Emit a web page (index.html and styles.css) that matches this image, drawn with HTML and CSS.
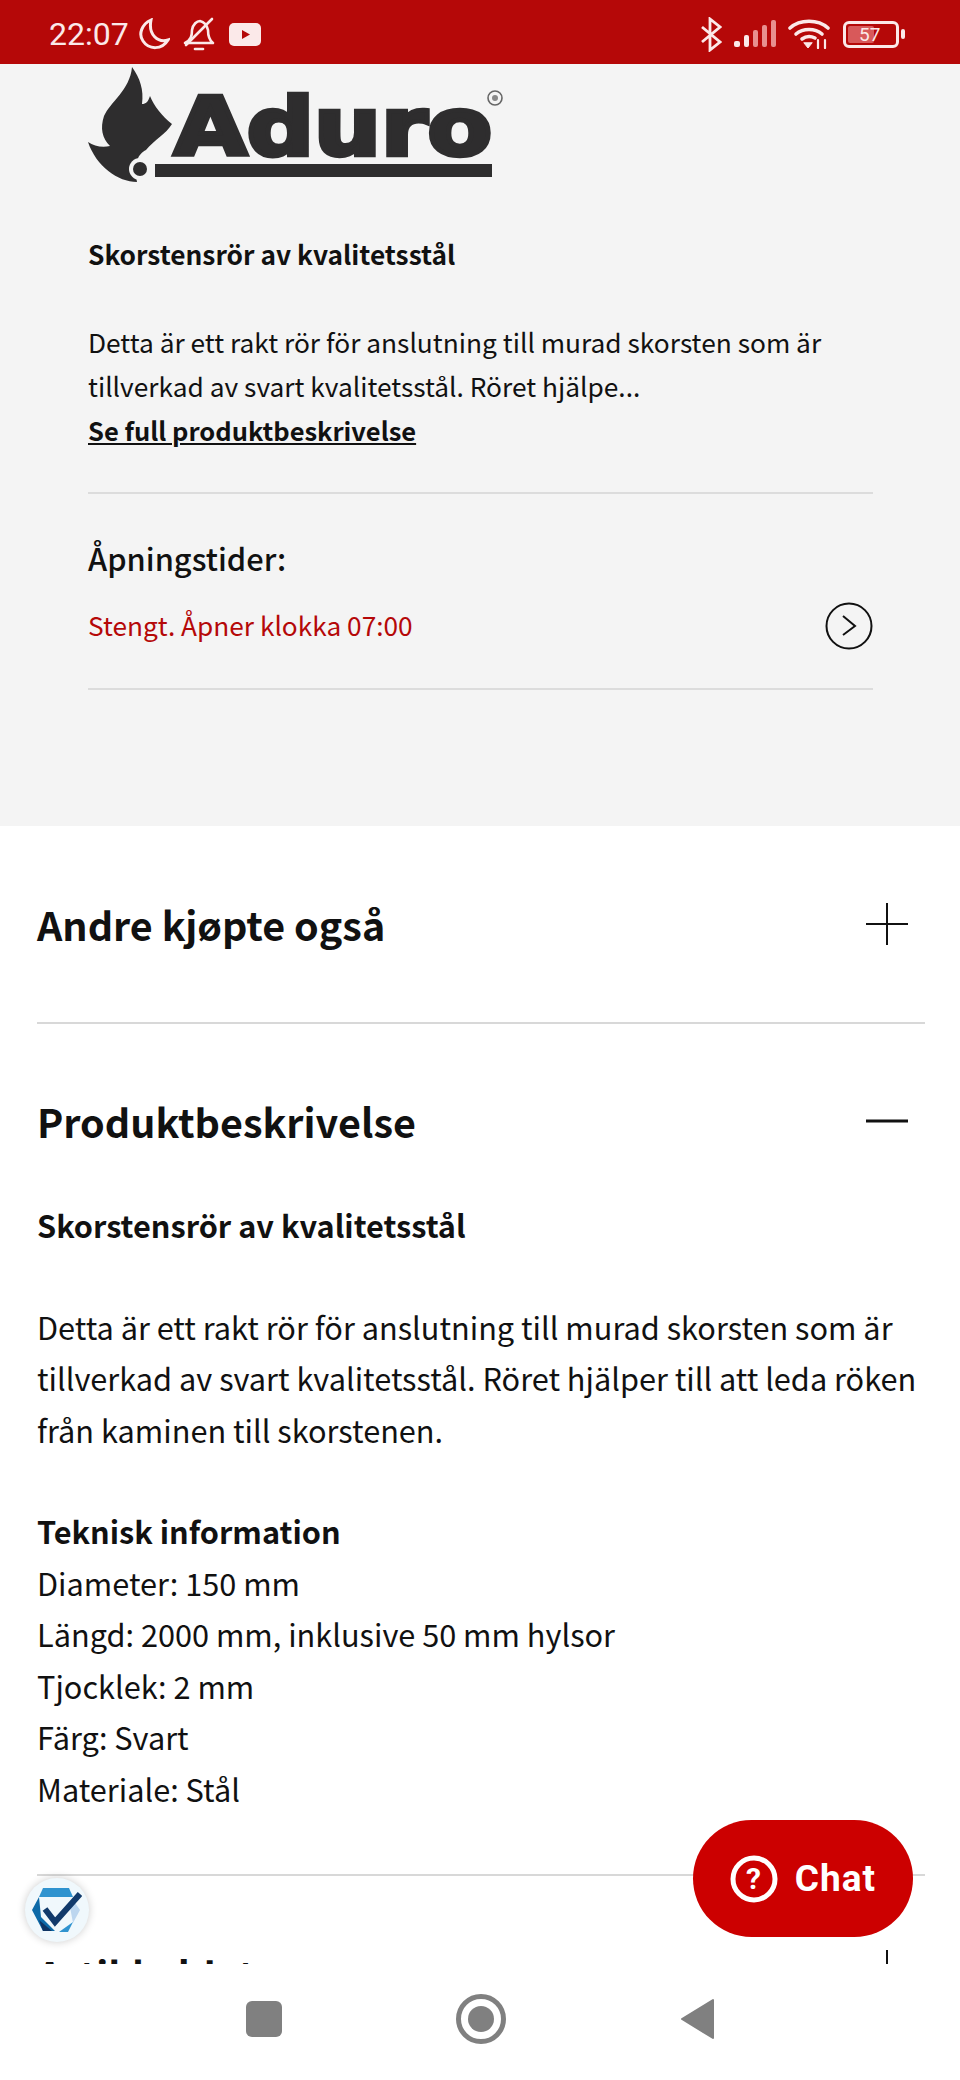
FILE: index.html
```html
<!DOCTYPE html>
<html lang="no">
<head>
  <meta charset="UTF-8" />
  <title>Skorstensrör</title>
  <meta name="viewport" content="width=device-width, initial-scale=1.0" />
  <link rel="stylesheet" href="styles.css">
</head>
<body>
  <div class="statusbar">
    <div class="status-left">
      <span class="clock">22:07</span>
      <svg class="moon" width="32" height="32" viewBox="0 0 32 32" fill="none" stroke="#fbe9e9" stroke-width="3"><path d="M13 2 C4 6 0 16 5 23 C11 32 24 32 30 22 C20 25 10 17 13 2 Z"/></svg>
      <svg class="bell" width="32" height="34" viewBox="0 0 32 34" fill="none" stroke="#fbe9e9" stroke-width="2.6" stroke-linecap="round" stroke-linejoin="round"><path d="M2 26 C8 23 9 19 9 13 C10 7 14 4 17 4 C22 5 24 9 25 13 C25 19 26 23 30 26 Z"/><path d="M29 2 L3 28"/><path d="M12 32 H20"/></svg>
      <svg class="yt" width="32" height="23" viewBox="0 0 32 23"><rect width="32" height="23" rx="5" fill="#fbe9e9"/><path d="M13 7 L21 11.5 L13 16 Z" fill="#b50808"/></svg>
    </div>
    <div class="status-right">
      <svg width="22" height="35" viewBox="0 0 22 35" fill="none" stroke="#fbe9e9" stroke-width="2.8"><path d="M2 10 L20 25 L10 33 V2 L20 10 L2 25"/></svg>
      <svg class="signal" width="42" height="28" viewBox="0 0 42 28"><rect x="0" y="21" width="6" height="6" rx="2" fill="#fbe9e9"/><rect x="10" y="15" width="5" height="12" rx="2" fill="#fbe9e9"/><rect x="19" y="10" width="5" height="17" rx="2" fill="#e8908f"/><rect x="28" y="5" width="5" height="22" rx="2" fill="#e8908f"/><rect x="37" y="0" width="5" height="27" rx="2" fill="#e8908f"/></svg>
      <svg class="wifi" width="42" height="30" viewBox="0 0 42 30" fill="none" stroke="#fbe9e9" stroke-width="3.6" stroke-linecap="round"><path d="M2 9 C12 0 30 0 40 9"/><path d="M8 15 C15 9 27 9 34 15"/><path d="M14 20 C18 17 23 17 27 19"/><path d="M16 24 L20 29 L24 24 Z" fill="#fbe9e9" stroke-width="1"/><path d="M30 21 V29 M37 21 V29" stroke-width="2.2"/></svg>
      <div class="battery"><div class="battery-fill"></div><span class="battery-num">57</span></div>
      <span class="battery-tip"></span>
    </div>
  </div>

  <section class="store">
    <svg class="logo" width="420" height="120" viewBox="0 0 420 120">
      <path d="M44 1 C52 12 56 24 54 38 C58 38 60 36 62 30 C66 40 74 50 84 58 C78 68 66 74 58 84 C50 88 46 96 49 116 C30 116 8 100 0 76 C6 80 14 82 22 80 C14 72 12 62 16 50 C22 36 42 24 44 1 Z" fill="#2e2d2e"/>
      <circle cx="52" cy="103" r="11" fill="#f4f4f4"/><circle cx="52" cy="103" r="7" fill="#2e2d2e"/>
      <rect x="67" y="98" width="337" height="13" fill="#2e2d2e"/>
      <text x="86" y="89" class="logo-word" textLength="318" lengthAdjust="spacingAndGlyphs">Aduro</text>
      <circle cx="407" cy="32" r="7" fill="none" stroke="#666" stroke-width="1.6"/>
      <circle cx="407" cy="32" r="3" fill="#888"/>
    </svg>
    <p class="store-title">Skorstensrör av kvalitetsstål</p>
    <p class="store-desc">Detta är ett rakt rör för anslutning till murad skorsten som är tillverkad av svart kvalitetsstål. Röret hjälpe...</p>
    <a class="store-link">Se full produktbeskrivelse</a>
    <hr class="store-line first">
    <h3 class="hours-title">Åpningstider:</h3>
    <div class="hours-row">
      <span class="hours-text">Stengt. Åpner klokka 07:00</span>
      <svg width="48" height="48" viewBox="0 0 48 48" fill="none" stroke="#111" stroke-width="2"><circle cx="24" cy="24" r="22.5"/><path d="M18 14 L30 24 L18 33"/></svg>
    </div>
    <hr class="store-line">
  </section>

  <section class="content">
    <div class="acc-head acc-first">
      <h2>Andre kjøpte også</h2>
      <svg width="42" height="42" viewBox="0 0 42 42" stroke="#111" stroke-width="2"><path d="M21 0 V42 M0 21 H42"/></svg>
    </div>
    <hr class="line">
    <div class="acc-head acc-second">
      <h2>Produktbeskrivelse</h2>
      <svg width="42" height="4" viewBox="0 0 42 4" stroke="#111" stroke-width="3"><path d="M0 2 H42"/></svg>
    </div>
    <div class="desc">
      <p class="desc-title">Skorstensrör av kvalitetsstål</p>
      <p class="desc-para">Detta är ett rakt rör för anslutning till murad skorsten som är tillverkad av svart kvalitetsstål. Röret hjälper till att leda röken från kaminen till skorstenen.</p>
      <p class="desc-specs"><b>Teknisk information</b><br>Diameter: 150 mm<br>Längd: 2000 mm, inklusive 50 mm hylsor<br>Tjocklek: 2 mm<br>Färg: Svart<br>Materiale: Stål</p>
    </div>
    <hr class="line">
    <div class="acc-cut">
      <h2>Artikkeldata</h2>
      <svg width="42" height="42" viewBox="0 0 42 42" stroke="#111" stroke-width="2"><path d="M21 0 V42 M0 21 H42"/></svg>
    </div>
  </section>

  <div class="navbar">
    <span class="nav-square"></span>
    <svg width="50" height="50" viewBox="0 0 50 50"><circle cx="25" cy="25" r="22.5" fill="none" stroke="#808080" stroke-width="5"/><circle cx="25" cy="25" r="13" fill="#808080"/></svg>
    <svg width="35" height="42" viewBox="0 0 35 42"><path d="M33 2 V40 L2 21 Z" fill="#808080" stroke="#808080" stroke-width="2" stroke-linejoin="round"/></svg>
  </div>

  <div class="badge">
    <svg width="50" height="46" viewBox="0 0 50 46">
      <path d="M11 1 H37 L41 10 H7 Z" fill="#2f93cf"/>
      <path d="M7 10 L0 23 L11 44 H23 L9 30 Z" fill="#0d6aa8"/>
      <path d="M11 44 L7 33 L20 44 Z" fill="#0f3564"/>
      <path d="M41 13 L48 23 L41 36 L38 20 Z" fill="#bcd6ef"/>
      <path d="M27 45 L41 35 L36 45 Z" fill="#2f93cf"/>
      <path d="M13 22 L23 35 L48 7" fill="none" stroke="#123a6b" stroke-width="6"/>
    </svg>
  </div>
  <div class="chat">
    <svg width="48" height="48" viewBox="0 0 48 48"><circle cx="24" cy="24" r="21" fill="none" stroke="#fff" stroke-width="5"/><text x="24" y="34" class="chat-q">?</text></svg>
    <span>Chat</span>
  </div>
</body>
</html>
```

FILE: styles.css
```css
html, body {
  margin: 0;
  padding: 0;
  background: #fff;
}

body {
  width: 960px;
  height: 2080px;
  overflow: hidden;
  position: relative;
  font-family: "Noto Sans CJK KR", "Noto Sans", sans-serif;
  color: #111;
}

.statusbar {
  height: 64px;
  background: #b50808;
  display: flex;
  justify-content: space-between;
  align-items: center;
  padding: 13px 55px 9px 49px;
  box-sizing: border-box;
  color: #fbe9e9;
}

.status-left, .status-right {
  display: flex;
  align-items: center;
}

.clock {
  font-family: "Roboto", sans-serif;
  font-size: 32px;
}

.moon { margin-left: 9px; }
.bell { margin-left: 13px; }
.yt { margin-left: 14px; }

.signal { margin-left: 12px; }
.wifi { margin-left: 12px; }

.battery {
  width: 56px;
  height: 27px;
  margin-left: 13px;
  border: 3px solid #fbe9e9;
  border-radius: 6px;
  box-sizing: border-box;
  position: relative;
  padding: 2px;
}

.battery-fill {
  width: 57%;
  height: 100%;
  background: #d8595a;
  border-radius: 2px;
}

.battery-num {
  position: absolute;
  left: 13px;
  top: -3px;
  font-family: "Roboto", sans-serif;
  font-size: 19px;
  line-height: 27px;
}

.battery-tip {
  width: 4px;
  height: 10px;
  margin-left: 2px;
  background: #fbe9e9;
  border-radius: 2px;
}

.store {
  height: 762px;
  background: #f4f4f4;
  padding: 2px 87px 0 88px;
  box-sizing: border-box;
}

.logo {
  display: block;
  overflow: visible;
}

.logo-word {
  font-family: "DejaVu Sans", sans-serif;
  font-weight: bold;
  font-size: 80px;
  fill: #2e2d2e;
  stroke: #2e2d2e;
  stroke-width: 4.5px;
}

.store-title {
  margin: 50px 0 0;
  font-size: 26.3px;
  font-weight: bold;
  line-height: 36px;
}

.store-desc {
  margin: 48px 0 0;
  font-size: 26.3px;
  line-height: 44px;
}

.store-link {
  display: block;
  font-size: 25.5px;
  font-weight: bold;
  line-height: 44px;
  text-decoration: underline;
}

.store-line {
  border: 0;
  border-top: 2px solid #dcdcdc;
  margin: 0;
}

.store-line.first { margin-top: 40px; }

.hours-title {
  margin: 44px 0 0;
  font-size: 30.8px;
  font-weight: 500;
  line-height: 40px;
}

.hours-row {
  display: flex;
  justify-content: space-between;
  align-items: center;
  margin: 24px 0 38px;
}

.hours-text {
  font-size: 26.25px;
  color: #b50808;
  padding-bottom: 3px;
}

.content {
  padding: 0 35px 0 37px;
}

.acc-head {
  display: flex;
  justify-content: space-between;
  align-items: center;
  padding-right: 17px;
}

.acc-head h2, .acc-cut h2 {
  margin: 0;
  font-size: 39.5px;
  font-weight: bold;
  line-height: 48px;
}

.acc-first { padding-top: 74px; padding-bottom: 74px; }
.acc-second { padding-top: 73px; }

.line {
  border: 0;
  border-top: 2px solid #d8d8d8;
  margin: 0;
}

.desc {
  font-size: 30.7px;
  line-height: 51.5px;
}

.desc p { margin: 0; }

.desc-title {
  font-weight: bold;
  padding-top: 54px;
}

.desc-para { padding-top: 50px; }
.desc-specs { padding: 50px 0 60px; }

.acc-cut {
  height: 90px;
  overflow: hidden;
  display: flex;
  justify-content: space-between;
  padding: 74px 17px 0 0;
  box-sizing: border-box;
}

.navbar {
  position: absolute;
  left: 0;
  right: 0;
  bottom: 0;
  height: 116px;
  background: #fff;
  display: flex;
  align-items: center;
  justify-content: center;
  gap: 174px;
  padding-bottom: 6px;
  box-sizing: border-box;
}

.nav-square {
  width: 36px;
  height: 36px;
  background: #808080;
  border-radius: 6px;
}

.badge {
  position: absolute;
  left: 25px;
  top: 1878px;
  width: 64px;
  height: 64px;
  border-radius: 50%;
  background: #f0f8fc;
  box-shadow: 0 0 8px rgba(0,0,0,0.2);
  display: flex;
  align-items: center;
  justify-content: center;
}

.chat {
  position: absolute;
  left: 693px;
  top: 1820px;
  width: 220px;
  height: 117px;
  border-radius: 59px;
  background: #cc0000;
  color: #fff;
  font-family: "Roboto", sans-serif;
  font-weight: bold;
  font-size: 37px;
  letter-spacing: 1px;
  display: flex;
  align-items: center;
  justify-content: center;
  gap: 17px;
}

.chat-q {
  font-family: "Roboto", sans-serif;
  font-weight: bold;
  font-size: 30px;
  fill: #fff;
  text-anchor: middle;
}
```
